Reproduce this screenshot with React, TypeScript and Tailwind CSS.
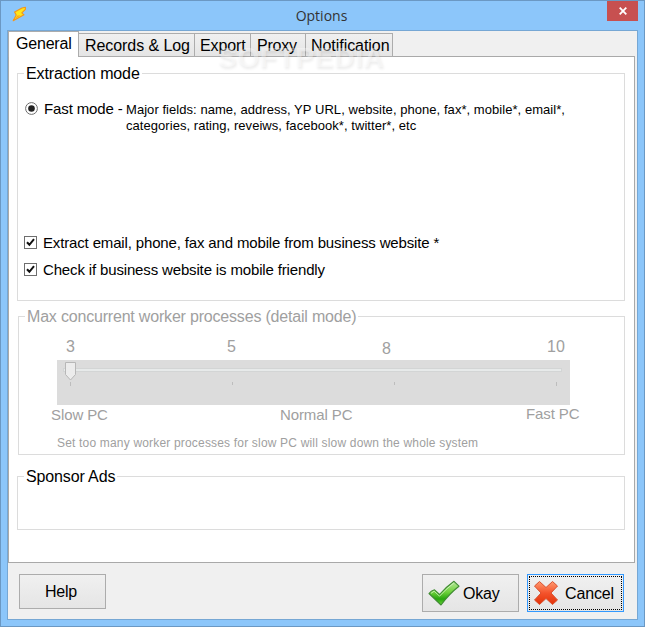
import { type ReactNode } from 'react'
import clsx from 'clsx'

const tabs = [
  { label: 'Records & Log', className: 'w-[117px] pl-[6px] tracking-[-0.07px]' },
  { label: 'Export', className: 'w-[57px] pl-[5px] tracking-[-0.1px]' },
  { label: 'Proxy', className: 'w-[56px] pl-[6px] tracking-[-0.2px]' },
  { label: 'Notification', className: 'w-[88px] pl-[5px] tracking-[-0.05px]' },
]

function Group({ title, disabled, className, children }: { title: string, disabled?: boolean, className: string, children?: ReactNode }) {
  return (
    <fieldset className={clsx('border border-[#dcdcdc] pl-[6px] min-w-0', disabled && 'text-[#a0a0a0]', className)}>
      <legend className={clsx('h-[19px] px-[2px] text-[16px] leading-[19px] whitespace-nowrap', disabled ? 'tracking-[-0.19px]' : 'tracking-[-0.13px]')}>{title}</legend>
      {children}
    </fieldset>
  )
}

function CheckRow({ label }: { label: string }) {
  return (
    <label className="flex h-[27px] items-center text-[15px] leading-[18px] tracking-[-0.15px]">
      <svg className="mr-[6px] h-[13px] w-[13px]" viewBox="0 0 13 13">
        <rect x="0.5" y="0.5" width="12" height="12" fill="#fff" stroke="#6e6e6e" />
        <path d="M3 6.2L5.4 8.8L10 3.2" fill="none" stroke="#111" strokeWidth="2" />
      </svg>
      {label}
    </label>
  )
}

function Bolt() {
  return (
    <svg className="h-[16px] w-[15px]" viewBox="0 0 15 16">
      <path d="M13.4 1.3L10 2L2.6 6L4.2 9L1.2 14.8L12 8.8L9.8 6.8L13.4 3.4Z" fill="#ffe71a" stroke="#f2951c" strokeWidth="1.1" strokeLinejoin="round" />
      <path d="M3 13L5.5 9.6L8.5 9.4Z" fill="#fba31d" />
    </svg>
  )
}

function Slider() {
  return (
    <svg className="h-[45px] w-[513px]" viewBox="0 0 513 45">
      <rect width="513" height="45" fill="#dcdcdc" />
      <rect x="6.5" y="8.5" width="498" height="3" fill="#e7eaea" stroke="#d3d5d5" />
      <path d="M8.5 2.5H18.5V14.5L13.5 20L8.5 14.5Z" fill="#ececec" stroke="#b7b7b7" />
      <path d="M13.5 22V26M175.5 22V25M337.5 22V25M499.5 22V26" stroke="#bdbdbd" />
    </svg>
  )
}

function CheckIcon() {
  return (
    <svg className="h-[28px] w-[34px]" viewBox="0 0 34 28">
      <defs>
        <linearGradient id="green" x1="0" y1="0" x2="0" y2="1">
          <stop offset="0" stopColor="#b5e69c" />
          <stop offset="0.45" stopColor="#6fd23c" />
          <stop offset="0.75" stopColor="#27a50d" />
          <stop offset="1" stopColor="#6cd63c" />
        </linearGradient>
      </defs>
      <path d="M2 14.5Q4 11.8 7.5 10.8L12.5 15.5Q18.5 8.5 27 2.3L32 7.2Q22 15 14 26Z" fill="url(#green)" stroke="#3f8a33" strokeWidth="1.1" strokeLinejoin="round" />
      <path d="M4 14.3L7.2 12.2L12.5 17.2Q19 10 26.8 4" fill="none" stroke="#e4fad6" strokeOpacity="0.7" />
    </svg>
  )
}

function CrossIcon() {
  return (
    <svg className="h-[26px] w-[26px]" viewBox="0 0 26 26">
      <defs>
        <linearGradient id="red" x1="0" y1="0" x2="0" y2="1">
          <stop offset="0" stopColor="#ff9a70" />
          <stop offset="0.5" stopColor="#f4532c" />
          <stop offset="1" stopColor="#e23208" />
        </linearGradient>
      </defs>
      <path d="M6.5 1.5L13 7.5L19.5 1.5L24.5 6L18 13L24.5 20L19.5 24.5L13 18.5L6.5 24.5L1.5 20L8 13L1.5 6Z" fill="url(#red)" stroke="#d9512f" strokeWidth="1" strokeLinejoin="round" />
    </svg>
  )
}

export default function App() {
  return (
    <div className="relative flex h-[627px] w-[645px] flex-col overflow-hidden border border-[#6b98c3] bg-[#8cc6fa] px-[6px] pb-[6px] font-['Liberation_Sans',Arial,sans-serif] text-black">
      {/* Title bar */}
      <header className="grid h-[29px] shrink-0 grid-cols-[1fr_auto_1fr]">
        <div className="pt-[5px] pl-[5px]"><Bolt /></div>
        <h1 className="-ml-[2px] pt-[5px] font-['Open_Sans',sans-serif] text-[14px] leading-[20px] text-[#333]">Options</h1>
        <button className="grid h-[20px] w-[31px] place-items-center justify-self-end bg-[#c75050]">
          <svg className="h-[8px] w-[8px]" viewBox="0 0 8 8">
            <path d="M0.7 0.7L7.3 7.3M7.3 0.7L0.7 7.3" stroke="#fff" strokeWidth="1.8" />
          </svg>
        </button>
      </header>

      <main className="flex min-h-0 flex-1 flex-col border border-[#76a7d4] bg-[#f0f0f0]">
        {/* Tabs sit one pixel over the page border */}
        <nav className="z-10 -mb-px flex h-[26px] items-end text-[16px] whitespace-nowrap">
          <div className="h-[26px] w-[71px] border border-b-0 border-[#acacac] bg-white pl-[7px] leading-[24px] tracking-[-0.2px]">General</div>
          {tabs.map((tab) => (
            <div key={tab.label} className={clsx('-ml-px h-[24px] border border-[#acacac] bg-linear-to-b from-[#f0f0f0] to-[#e5e5e5] leading-[24px]', tab.className)}>
              {tab.label}
            </div>
          ))}
        </nav>

        <section className="mr-[2px] h-[507px] shrink-0 border border-[#a9a9a9] bg-white pr-[9px] pl-[8px]">
          <Group title="Extraction mode" className="mt-[7px] h-[237px]">
            <div className="mt-[17px] flex">
              <svg className="mt-[2px] ml-[1px] h-[13px] w-[13px]" viewBox="0 0 13 13">
                <circle cx="6.5" cy="6.5" r="5.9" fill="#fff" stroke="#6e6e6e" />
                <circle cx="6.5" cy="6.5" r="3.3" fill="#222" />
              </svg>
              <span className="ml-[6px] w-[82px] text-[15px] leading-[18px] tracking-[-0.12px] whitespace-nowrap">Fast mode -</span>
              <p className="pt-[2px] text-[13px] leading-[16px] tracking-[0.05px] whitespace-nowrap">
                Major fields: name, address, YP URL, website, phone, fax*, mobile*, email*,
                <br />
                categories, rating, reveiws, facebook*, twitter*, etc
              </p>
            </div>
            <div className="mt-[95px]">
              <CheckRow label="Extract email, phone, fax and mobile from business website *" />
              <CheckRow label="Check if business website is mobile friendly" />
            </div>
          </Group>

          <Group title="Max concurrent worker processes (detail mode)" disabled className="mt-[6px] ml-[1px] h-[148px]">
            <div className="ml-[41px] flex h-[34px] pt-[12px] text-[16px] leading-[18px]">
              <span className="w-[161px]">3</span>
              <span className="w-[155px]">5</span>
              <span className="w-[165px] pt-[2px]">8</span>
              <span>10</span>
            </div>
            <div className="ml-[32px]"><Slider /></div>
            <div className="ml-[26px] flex h-[30px] text-[15px] leading-[18px] tracking-[-0.1px] whitespace-nowrap">
              <span className="w-[229px] pt-[1px]">Slow PC</span>
              <span className="w-[246px] pt-[1px]">Normal PC</span>
              <span>Fast PC</span>
            </div>
            <p className="ml-[32px] text-[12px] leading-[16px] tracking-[0.18px] whitespace-nowrap">Set too many worker processes for slow PC will slow down the whole system</p>
          </Group>

          <Group title="Sponsor Ads" className="mt-[12px] h-[63px]" />
        </section>

        {/* Bottom buttons */}
        <footer className="flex items-start pt-[11px] pl-[11px] text-[16px]">
          <button className="h-[35px] w-[87px] border border-[#acacac] bg-linear-to-b from-[#f0f0f0] to-[#e5e5e5] pr-[3px] tracking-[-0.2px]">Help</button>
          <button className="ml-[316px] flex h-[38px] w-[97px] items-center border border-[#acacac] bg-linear-to-b from-[#f0f0f0] to-[#e5e5e5] pl-[4px]">
            <CheckIcon />
            <span className="ml-[2px] pt-[2px] tracking-[-0.2px]">Okay</span>
          </button>
          <button className="ml-[8px] h-[38px] w-[97px] border border-[#3399ff] bg-linear-to-b from-[#f0f0f0] to-[#e5e5e5] p-px">
            <span className="flex h-full items-center border border-dotted border-black pl-[3px]">
              <CrossIcon />
              <span className="ml-[6px] pt-[2px] tracking-[-0.15px]">Cancel</span>
            </span>
          </button>
        </footer>
      </main>

      <div className="pointer-events-none absolute top-[42px] left-[217px] z-20 text-[28px] leading-[30px] font-bold tracking-[0.7px] text-white/40 [text-shadow:1px_2px_3px_rgba(0,0,0,0.08)]">SOFTPEDIA</div>
    </div>
  )
}
